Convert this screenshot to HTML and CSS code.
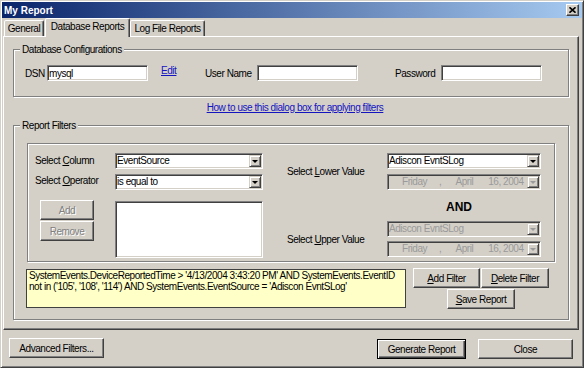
FILE: index.html
```
<!DOCTYPE html>
<html>
<head>
<title>My Report</title>
<link rel="stylesheet" href="styles.css">
</head>
<body>

<div class="window">
  <div class="titlebar">
    <span class="title">My Report</span>
    <span class="close"><svg width="7" height="6" viewBox="0 0 7 6"><path d="M0.5 0.3 L6.5 5.7 M6.5 0.3 L0.5 5.7" stroke="#000" stroke-width="1.6" fill="none"/></svg></span>
  </div>

  <div class="tabs">
    <div class="tab tab-general">General</div>
    <div class="tab tab-active">Database Reports</div>
    <div class="tab tab-log">Log File Reports</div>
  </div>

  <div class="panel">

    <div class="group group-db">
      <span class="group-title">Database Configurations</span>
      <div class="cfg-row">
        <span class="lbl-dsn">DSN</span>
        <input class="field" type="text" value="mysql">
        <a class="edit-link" href="#">Edit</a>
        <span class="lbl-user">User Name</span>
        <input class="field" type="text" value="">
        <span class="lbl-pass">Password</span>
        <input class="field" type="password" value="">
      </div>
    </div>

    <div class="help"><a href="#">How to use this dialog box for applying filters</a></div>

    <div class="group group-filters">
      <span class="group-title">Report Filters</span>

      <div class="filters-box">
        <div class="col-a">
          <div class="lbl lbl-first">Select <u>C</u>olumn</div>
          <div class="lbl lbl-second">Select <u>O</u>perator</div>
          <button class="btn disabled btn-add">Add</button>
          <button class="btn disabled btn-remove">Remove</button>
        </div>

        <div class="col-b">
          <div class="combo combo-first"><span class="combo-text">EventSource</span><span class="combo-btn"></span></div>
          <div class="combo combo-second"><span class="combo-text">is equal to</span><span class="combo-btn"></span></div>
          <div class="listbox"></div>
        </div>

        <div class="col-c">
          <div class="lbl lbl-lower">Select <u>L</u>ower Value</div>
          <div class="lbl lbl-upper">Select <u>U</u>pper Value</div>
        </div>

        <div class="col-d">
          <div class="combo combo-first"><span class="combo-text">Adiscon EvntSLog</span><span class="combo-btn"></span></div>
          <div class="combo date disabled">
            <span class="combo-text"><span class="d-day">Friday</span><span class="d-comma">,</span><span class="d-month">April</span><span class="d-year">16, 2004</span></span>
            <span class="combo-btn"></span>
          </div>
          <div class="and">AND</div>
          <div class="combo disabled combo-upper"><span class="combo-text">Adiscon EvntSLog</span><span class="combo-btn"></span></div>
          <div class="combo date disabled combo-upper">
            <span class="combo-text"><span class="d-day">Friday</span><span class="d-comma">,</span><span class="d-month">April</span><span class="d-year">16, 2004</span></span>
            <span class="combo-btn"></span>
          </div>
        </div>
      </div>

      <div class="filter-bottom">
        <div class="sql">SystemEvents.DeviceReportedTime &gt; '4/13/2004 3:43:20 PM' AND SystemEvents.EventID<br>not in ('105', '108', '114') AND SystemEvents.EventSource = 'Adiscon EvntSLog'</div>
        <div class="filter-btns">
          <div class="btn-row">
            <button class="btn btn-addfilter"><u>A</u>dd Filter</button>
            <button class="btn btn-delfilter"><u>D</u>elete Filter</button>
          </div>
          <button class="btn btn-save"><u>S</u>ave Report</button>
        </div>
      </div>
    </div>

  </div>

  <div class="footer">
    <button class="btn btn-advanced">Advanced Filters...</button>
    <button class="btn default btn-generate">Generate Report</button>
    <button class="btn btn-close">Close</button>
  </div>
</div>

</body>
</html>
```

FILE: styles.css
```
body {
  margin: 0px;
  background-color: #d4d0c8;
  font-family: "Liberation Sans", Arial, sans-serif;
  font-size: 10px;
  letter-spacing: -0.45px;
  color: black;
}

.window {
  width: 584px;
  height: 368px;
  box-sizing: border-box;
  border: 1px solid;
  border-color: #d4d0c8 #404040 #404040 #d4d0c8;
  box-shadow: inset 1px 1px #fff, inset -1px -1px #808080;
  padding: 1px;
  background-color: #d4d0c8;
}

.titlebar {
  height: 16px;
  display: flex;
  align-items: center;
  justify-content: space-between;
  padding: 0 3px 0 2px;
  background: linear-gradient(to right, #0a246a, #a6caf0);
}

.title {
  color: white;
  font-weight: bold;
  font-size: 10px;
  letter-spacing: 0;
}

.close {
  width: 13px;
  height: 12px;
  box-sizing: border-box;
  display: flex;
  align-items: center;
  justify-content: center;
  background-color: #d4d0c8;
  border: 1px solid;
  border-color: #fff #404040 #404040 #fff;
  box-shadow: inset -1px -1px #808080;
}

/* tabs */

.tabs {
  display: flex;
  align-items: flex-end;
  height: 18px;
  margin-left: 2px;
}

.tab {
  height: 16px;
  box-sizing: border-box;
  border: 1px solid;
  border-bottom: none;
  border-color: #fff #404040 transparent #fff;
  border-radius: 2px 2px 0 0;
  box-shadow: inset -1px 0 #808080;
  text-align: center;
  line-height: 15px;
  white-space: nowrap;
  background-color: #d4d0c8;
}

.tab-general {
  width: 40px;
}

.tab-active {
  position: relative;
  z-index: 1;
  width: 85px;
  height: 19px;
  margin-left: 1px;
  margin-bottom: -1px;
  line-height: 16px;
}

.tab-log {
  width: 75px;
}

.panel {
  margin-left: 1px;
  width: 576px;
  height: 294px;
  box-sizing: border-box;
  border: 1px solid;
  border-color: #fff #404040 #404040 #fff;
  box-shadow: inset -1px -1px #808080;
}

/* group boxes */

.group {
  position: relative;
  width: 556px;
  box-sizing: border-box;
  margin-left: 9px;
  border: 1px solid #808080;
  box-shadow: inset 1px 1px #fff, 1px 1px #fff;
}

.group-title {
  position: absolute;
  top: -6px;
  left: 6px;
  padding: 0 2px;
  line-height: 12px;
  white-space: nowrap;
  background-color: #d4d0c8;
}

.group-db {
  margin-top: 12px;
  height: 48px;
}

.group-filters {
  margin-top: 11px;
  height: 195px;
}

.cfg-row {
  display: flex;
  align-items: center;
  margin-top: 15px;
  padding-left: 11px;
  white-space: nowrap;
}

.lbl-dsn {
  width: 22px;
}

.field {
  width: 101px;
  height: 16px;
  box-sizing: border-box;
  margin: 0;
  padding: 0 1px;
  border: 1px solid;
  border-color: #808080 #fff #fff #808080;
  box-shadow: inset 1px 1px #404040, inset -1px -1px #d4d0c8;
  background-color: white;
  font-family: "Liberation Sans", Arial, sans-serif;
  font-size: 10px;
  letter-spacing: -0.45px;
  outline: none;
}

.edit-link {
  align-self: flex-start;
  width: 44px;
  margin-left: 13px;
  line-height: 12px;
  color: #1414c0;
}

.lbl-user {
  width: 52px;
}

.lbl-pass {
  width: 83px;
  box-sizing: border-box;
  padding-left: 37px;
}

.help {
  margin-top: 5px;
  padding-left: 8px;
  line-height: 12px;
  text-align: center;
}

.help a {
  color: #1414c0;
}

/* filter area */

.filters-box {
  display: flex;
  width: 528px;
  height: 119px;
  box-sizing: border-box;
  margin: 17px 0 0 13px;
  border: 1px solid #808080;
  box-shadow: inset 1px 1px #fff, 1px 1px #fff;
}

.col-a {
  width: 87px;
  display: flex;
  flex-direction: column;
  align-items: flex-start;
}

.col-b {
  width: 148px;
}

.col-c {
  width: 124px;
}

.col-d {
  width: 154px;
}

.lbl {
  height: 16px;
  line-height: 16px;
  white-space: nowrap;
}

.col-a .lbl {
  padding-left: 7px;
}

.lbl-first {
  margin-top: 9px;
}

.lbl-second {
  margin-top: 4px;
}

.col-c .lbl {
  padding-left: 24px;
}

.lbl-lower {
  margin-top: 20px;
}

.lbl-upper {
  margin-top: 52px;
}

/* combo boxes */

.combo {
  display: flex;
  height: 16px;
  box-sizing: border-box;
  padding: 1px;
  border: 1px solid;
  border-color: #808080 #fff #fff #808080;
  box-shadow: inset 1px 1px #404040, inset -1px -1px #d4d0c8;
  background-color: white;
}

.combo-text {
  flex: 1;
  display: flex;
  line-height: 12px;
  white-space: nowrap;
  overflow: hidden;
}

.combo-btn {
  width: 12px;
  height: 12px;
  box-sizing: border-box;
  display: flex;
  align-items: center;
  justify-content: center;
  border: 1px solid;
  border-color: #d4d0c8 #404040 #404040 #d4d0c8;
  box-shadow: inset 1px 1px #fff, inset -1px -1px #808080;
  background-color: #d4d0c8;
}

.combo-btn::after {
  content: "";
  border-left: 3px solid transparent;
  border-right: 3px solid transparent;
  border-top: 3px solid black;
}

.combo-first {
  margin-top: 9px;
}

.combo-second {
  margin-top: 5px;
}

.combo.disabled {
  background-color: #d4d0c8;
  color: #9a9a9a;
}

.combo.disabled .combo-btn::after {
  border-top-color: #9a9a9a;
}

.date {
  margin-top: 5px;
}

.combo-upper {
  margin-top: 4px;
}

.d-day {
  margin-left: 13px;
}

.d-comma {
  margin-left: 12px;
}

.d-month {
  margin-left: 14px;
}

.d-year {
  margin-left: 15px;
}

.and {
  margin-top: 7px;
  padding-right: 10px;
  line-height: 20px;
  text-align: center;
  font-weight: bold;
  font-size: 12px;
  letter-spacing: 0;
}

.listbox {
  margin-top: 11px;
  height: 57px;
  box-sizing: border-box;
  border: 1px solid;
  border-color: #808080 #fff #fff #808080;
  box-shadow: inset 1px 1px #404040, inset -1px -1px #d4d0c8;
  background-color: white;
}

/* buttons */

.btn {
  height: 20px;
  box-sizing: border-box;
  margin: 0;
  padding: 0;
  border: 1px solid;
  border-color: #fff #404040 #404040 #fff;
  box-shadow: inset -1px -1px #808080;
  background-color: #d4d0c8;
  color: black;
  font-family: "Liberation Sans", Arial, sans-serif;
  font-size: 10px;
  letter-spacing: -0.45px;
  white-space: nowrap;
}

.btn.disabled {
  color: #808080;
  text-shadow: 1px 1px #fff;
}

.btn.default {
  border: 1px solid black;
  box-shadow: inset 1px 1px #fff, inset -1px -1px #404040, inset -2px -2px #808080;
}

.btn-add {
  width: 54px;
  margin: 11px 0 0 12px;
}

.btn-remove {
  width: 54px;
  margin: 1px 0 0 12px;
}

.filter-bottom {
  display: flex;
  align-items: flex-start;
  margin: 6px 0 0 12px;
}

.sql {
  width: 380px;
  height: 39px;
  box-sizing: border-box;
  margin-top: 1px;
  padding: 0 2px;
  border: 1px solid #404040;
  background-color: #ffffc8;
  line-height: 11px;
  white-space: nowrap;
  overflow: hidden;
}

.filter-btns {
  margin-left: 7px;
  display: flex;
  flex-direction: column;
  align-items: center;
}

.btn-row {
  display: flex;
}

.btn-addfilter {
  width: 67px;
}

.btn-delfilter {
  width: 68px;
  margin-left: 1px;
}

.btn-save {
  width: 68px;
  margin-top: 1px;
}

.footer {
  display: flex;
  align-items: flex-start;
  margin-top: 8px;
  padding: 0 9px 0 7px;
}

.btn-advanced {
  width: 95px;
}

.btn-generate {
  width: 89px;
  margin: 1px 0 0 auto;
}

.btn-close {
  width: 95px;
  margin: 1px 0 0 12px;
}
```
